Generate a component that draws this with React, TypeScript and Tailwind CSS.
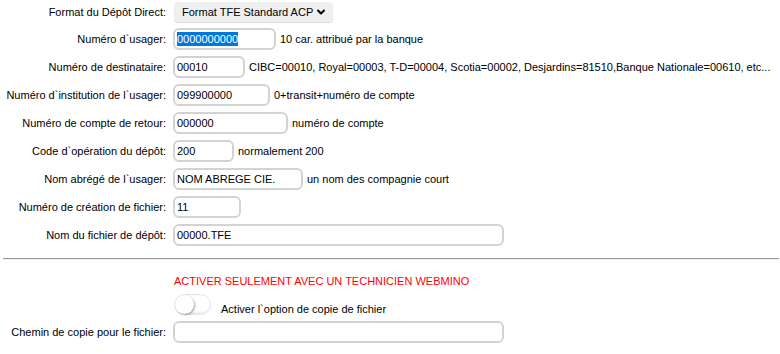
import { ChevronDown } from "lucide-react"

type Row = { label: string; value: string; width: string; hint?: string; selected?: boolean }

const rows: Row[] = [
  { label: "Numéro d`usager:", value: "0000000000", width: "w-[103px]", hint: "10 car. attribué par la banque", selected: true },
  { label: "Numéro de destinataire:", value: "00010", width: "w-[72px]", hint: "CIBC=00010, Royal=00003, T-D=00004, Scotia=00002, Desjardins=81510,Banque Nationale=00610, etc..." },
  { label: "Numéro d`institution de l`usager:", value: "099900000", width: "w-[97px]", hint: "0+transit+numéro de compte" },
  { label: "Numéro de compte de retour:", value: "000000", width: "w-[115px]", hint: "numéro de compte" },
  { label: "Code d`opération du dépôt:", value: "200", width: "w-[61px]", hint: "normalement 200" },
  { label: "Nom abrégé de l`usager:", value: "NOM ABREGE CIE.", width: "w-[130px]", hint: "un nom des compagnie court" },
  { label: "Numéro de création de fichier:", value: "11", width: "w-[68px]" },
  { label: "Nom du fichier de dépôt:", value: "00000.TFE", width: "w-[331px]" },
]

function Field({ row }: { row: Row }) {
  return (
    <div className="flex items-center h-[22px]">
      <div className="w-[167px] shrink-0 text-right pr-[1px] whitespace-nowrap">{row.label}</div>
      <div className={`ml-[6px] ${row.width} h-[22px] shrink-0 rounded-[6px] border-2 border-[#d3d3d3] bg-white flex items-center pl-[2px]`}>
        {row.selected
          ? <span className="bg-[#0078d7] text-white leading-[14px]">{row.value}</span>
          : <span>{row.value}</span>}
      </div>
      {row.hint && <div className="ml-[4px] whitespace-nowrap">{row.hint}</div>}
    </div>
  )
}

export default function App() {
  return (
    <div className="w-[780px] h-[354px] bg-white text-black text-[11px] [font-family:'Liberation_Sans',Arial,sans-serif] overflow-hidden">
      <div className="flex flex-col gap-[6px] pt-[2px]">
        <div className="flex items-center h-[20px]">
          <div className="w-[167px] shrink-0 text-right pr-[1px] whitespace-nowrap">Format du Dépôt Direct:</div>
          <div className="ml-[7px] w-[159px] h-[20px] rounded-[4px] bg-[#efefef] shadow-[0_1px_1px_rgba(0,0,0,0.15)] flex items-center pl-[8px] pr-[6px] justify-between whitespace-nowrap">
            <span>Format TFE Standard ACP</span>
            <ChevronDown size={12} strokeWidth={4} />
          </div>
        </div>
        {rows.map((r, i) => <Field key={i} row={r} />)}
      </div>

      <div className="mt-[12px] ml-[3px] mr-[1px] border-t border-t-[#9a9a9a] border-b border-b-[#eeeeee]" />

      <div className="ml-[174px] mt-[14px] text-[#ff0000] h-[14px] leading-[14px] whitespace-nowrap">ACTIVER SEULEMENT AVEC UN TECHNICIEN WEBMINO</div>

      <div className="flex items-center mt-[6px] ml-[174px] h-[21px]">
        <div className="w-[37px] h-[21px] rounded-full bg-white border border-[#e4e4e4] shadow-[inset_2px_-1px_3px_rgba(0,0,0,0.12)] flex items-center">
          <div className="w-[19px] h-[19px] rounded-full bg-white shadow-[1px_1px_2px_rgba(0,0,0,0.35)]" />
        </div>
        <div className="ml-[10px] mt-[10px] whitespace-nowrap">Activer l`option de copie de fichier</div>
      </div>

      <div className="flex items-center h-[22px] mt-[6px]">
        <div className="w-[167px] shrink-0 text-right pr-[1px] whitespace-nowrap">Chemin de copie pour le fichier:</div>
        <div className="ml-[6px] w-[331px] h-[22px] shrink-0 rounded-[6px] border-2 border-[#d3d3d3] bg-white" />
      </div>
    </div>
  )
}
